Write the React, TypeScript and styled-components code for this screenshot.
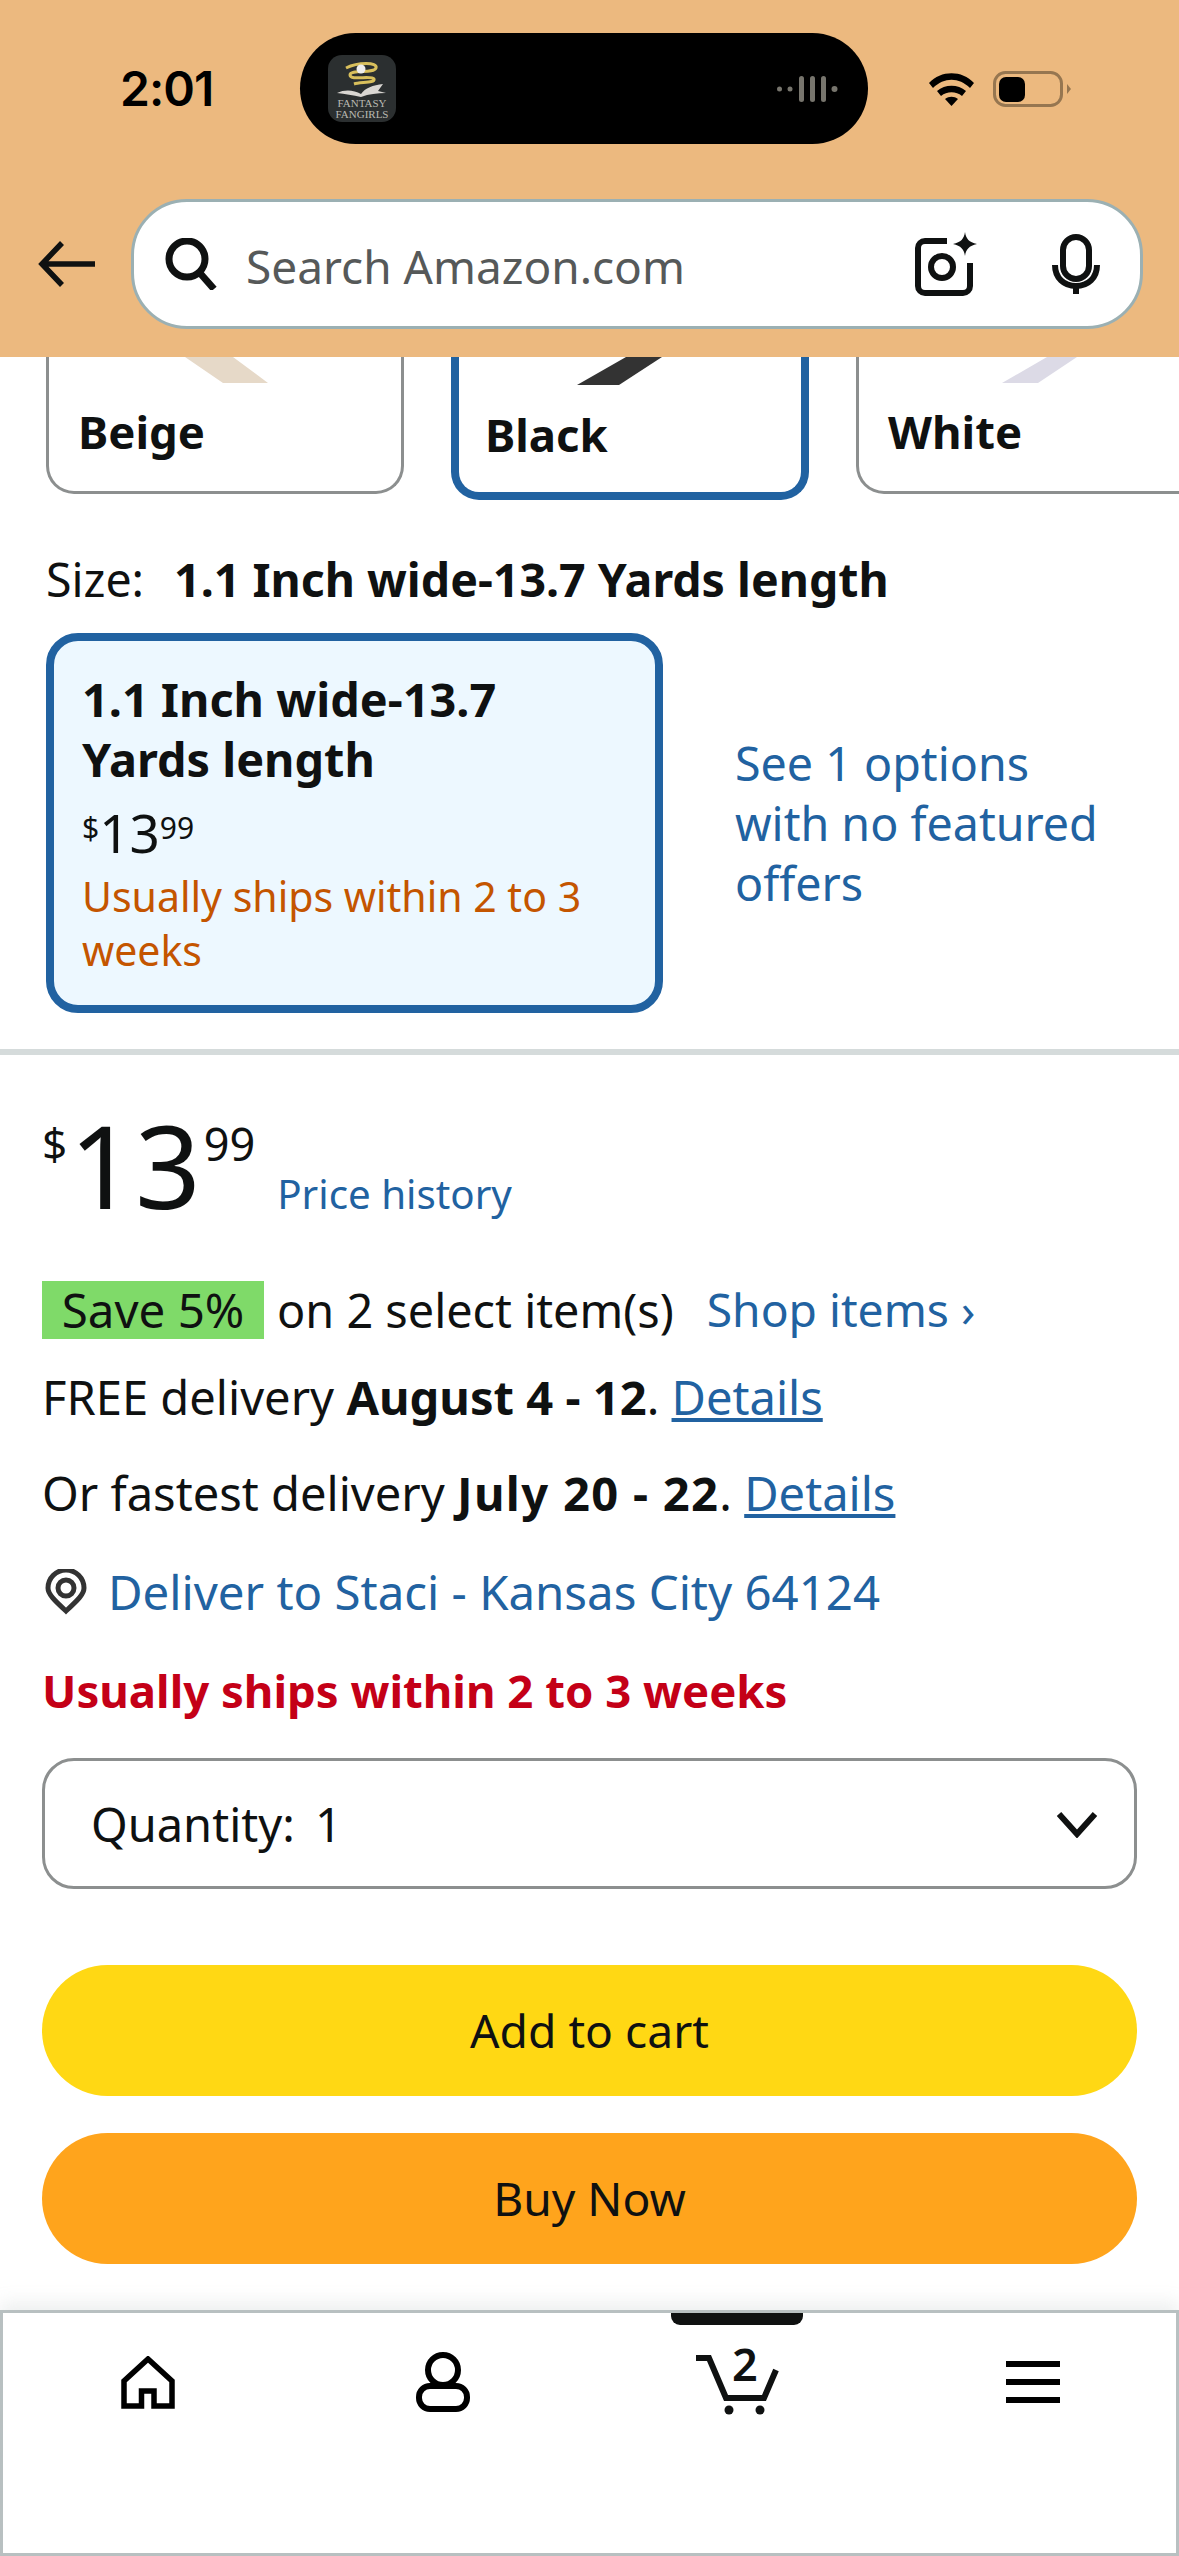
import React from "react";
import styled, { createGlobalStyle } from "styled-components";

const Global = createGlobalStyle`
  html, body { margin: 0; padding: 0; background: #fff; }
  body { font-family: "Noto Sans", "Open Sans", sans-serif; color: #0f1111; }
  * { box-sizing: border-box; }
`;

const Page = styled.div`
  width: 1179px; height: 2556px; display: flex; flex-direction: column; overflow: hidden;
`;
const Header = styled.header`
  height: 357px; background: #ecb97f; flex: none; display: flex; flex-direction: column;
`;
const StatusBar = styled.div`
  height: 199px; padding: 33px 72px 0 120px; display: flex; align-items: flex-start;
`;
const Time = styled.div`
  width: 180px; height: 111px; display: flex; align-items: center;
  font: 600 48px/1 "Inter", sans-serif; letter-spacing: -1px; color: #000;
`;
const Island = styled.div`
  width: 568px; height: 111px; background: #000; border-radius: 56px; display: flex; align-items: center;
  justify-content: space-between; padding: 0 30px 0 28px;
`;
const StatusIcons = styled.div`
  flex: 1; height: 111px; display: flex; align-items: center; gap: 18px; padding-left: 60px;
`;
const Search = styled.div`
  display: flex; align-items: center; padding: 0 0 0 38px; gap: 35px;
`;
const SearchBox = styled.div`
  width: 1012px; height: 130px; background: #fff; border: 3px solid #9bb0b3; border-radius: 56px;
  display: flex; align-items: center; padding: 0 40px 0 31px;
`;
const Placeholder = styled.div`
  flex: 1; font-size: 46px; color: #565959; padding: 4px 0 0 29px;
`;
const CameraSlot = styled.span`
  display: flex; margin-right: 73px;
`;
const Swatches = styled.div`
  display: flex; gap: 47px; padding-left: 46px; height: 143px; align-items: flex-start; flex: none; overflow: hidden;
`;
const Swatch = styled.div<{ $on?: boolean }>`
  flex: none; width: 358px; height: ${p => (p.$on ? 143 : 137)}px;
  background: #fff; border: ${p => (p.$on ? "8px solid #2162a1" : "3px solid #8c8f8f")}; border-top: 0;
  border-radius: 0 0 28px 28px; position: relative;
  padding: ${p => (p.$on ? "46px 0 0 26px" : "43px 0 0 29px")};
  font-size: 45.5px; font-weight: 700; line-height: 62px;
`;
const Thread = styled.svg`
  position: absolute; top: 0; left: 100px;
`;
const SizeRow = styled.div`
  display: flex; gap: 30px; padding: 49px 0 0 46px; font-size: 46.5px; line-height: 60px; flex: none;
`;
const Strong = styled.span<{ $track?: boolean }>`
  font-weight: 700;
  letter-spacing: ${p => (p.$track ? "1.3px" : "0")};
`;
const SizeBlock = styled.div`
  display: flex; align-items: center; padding: 24px 0 0 46px; flex: none;
`;
const SizeCard = styled.div`
  width: 617px; height: 380px; background: #edf8ff; border: 8px solid #2162a1; border-radius: 32px;
  padding: 28px 0 0 28px; flex: none;
`;
const CardTitle = styled.div`
  font-size: 46.8px; font-weight: 700; line-height: 60px; width: 530px;
`;
const CardPrice = styled.div`
  display: flex; align-items: flex-start; margin-top: 16px; height: 56px;
  font-size: 53px; line-height: 56px;
`;
const Sup = styled.span`
  font-size: 30px; line-height: 1; margin-top: 8px;
`;
const CardShips = styled.div`
  color: #c45500; font-size: 41px; line-height: 54px; margin-top: 8px; width: 535px;
`;
const OptionsLink = styled.a`
  color: #2162a1; font-size: 46.6px; line-height: 60px; width: 380px; margin-left: 72px;
`;
const Divider = styled.div`
  height: 6px; background: #d5dbdb; margin-top: 36px; flex: none;
`;
const Details = styled.div`
  padding: 0 42px; display: flex; flex-direction: column; flex: none;
`;
const PriceRow = styled.div`
  display: flex; align-items: flex-start; height: 130px; margin-top: 58px; color: #0f1111;
`;
const PriceDollar = styled.span`
  font-size: 44px; line-height: 1; margin-top: 8px;
`;
const PriceMain = styled.span`
  font-size: 115px; line-height: 104px; margin-left: 2px;
`;
const PriceCents = styled.span`
  font-size: 45px; line-height: 1; margin: 8px 0 0 3px;
`;
const PriceHistory = styled.a`
  color: #2162a1; font-size: 40.3px; line-height: 54px; margin: 54px 0 0 22px;
`;
const PromoRow = styled.div`
  display: flex; align-items: center; font-size: 46.8px; margin-top: 38px; height: 58px; line-height: 58px;
`;
const Badge = styled.span`
  background: #7fda69; width: 222px; height: 58px; display: flex; align-items: center; justify-content: center; margin-right: 13px;
  font-size: 47.5px;
`;
const PromoLink = styled.a`
  color: #2162a1; margin-left: 33px; font-size: 46.2px;
`;
const Line = styled.div<{ $mt: number }>`
  font-size: 47.1px; line-height: 60px; margin-top: ${p => p.$mt}px;
`;
const Under = styled.a`
  color: #2162a1; text-decoration: underline;
`;
const LocationRow = styled.a`
  display: flex; align-items: center; gap: 21px; color: #2162a1; font-size: 47.4px; line-height: 60px; margin-top: 39px; padding-left: 3px;
`;
const Ships = styled.div`
  color: #c40017; font-size: 45.5px; font-weight: 700; line-height: 60px; margin-top: 38px;
`;
const Quantity = styled.div`
  height: 131px; border: 3px solid #8c8f8f; border-radius: 32px; display: flex; align-items: center;
  justify-content: space-between; padding: 0 36px 0 46px; font-size: 47px; margin-top: 38px; width: 1095px;
`;
const QtyValue = styled.span` margin-left: 8px; `;
const ActionButton = styled.div<{ $bg: string; $mt: number }>`
  width: 1095px; height: 131px; border-radius: 66px; background: ${p => p.$bg}; margin-top: ${p => p.$mt}px;
  display: flex; align-items: center; justify-content: center; font-size: 46.2px; color: #0f1111;
`;
const BottomNav = styled.nav`
  margin-top: auto; height: 246px; border: 3px solid #b8c0c1; background: #fff;
  box-shadow: 0 -8px 16px rgba(160,170,170,.18); position: relative; flex: none;
`;
const NavGrid = styled.div`
  display: grid; grid-template-columns: repeat(4, 295px); margin-left: -3px;
`;
const ActiveBar = styled.div`
  position: absolute; top: 0; left: 668px; width: 132px; height: 12px; background: #0f1111; border-radius: 0 0 9px 9px;
`;
const NavCell = styled.div<{ $top: number }>`
  height: 120px; display: flex; justify-content: center; align-items: flex-start; padding-top: ${p => p.$top}px;
`;
const CartWrap = styled.div`
  position: relative; width: 83px; height: 68px;
`;
const CartCount = styled.span`
  position: absolute; left: 36px; top: -11px; font-size: 45px; line-height: 56px; font-weight: 600; color: #0f1111;
`;

export default function App() {
  return (
    <Page>
      <Global />
      <Header>
        <StatusBar>
          <Time>2:01</Time>
          <Island>
            <svg width="68" height="67" viewBox="0 0 68 67">
              <rect width="68" height="67" rx="14" fill="#2b2f30" />
              <path d="M18 13c12-6 32-6 30 0s-26 1-26 7 22 0 24 4-14 3-20 5" fill="none" stroke="#d8bf5c" strokeWidth="3" />
              <circle cx="33" cy="14" r="4.5" fill="#eee" />
              <path d="M9 38c8-4 17-3 24 1 4-6 12-9 22-10l-5 7 8 2c-9 0-17 1-25 4-8-2-16-3-24-4z" fill="#d9d6d2" />
              <text x="34" y="52" textAnchor="middle" fontFamily="Liberation Serif, serif" fontSize="11" fill="#b9b9b2">FANTASY</text>
              <text x="34" y="63" textAnchor="middle" fontFamily="Liberation Serif, serif" fontSize="11" fill="#b9b9b2">FANGIRLS</text>
            </svg>
            <svg width="61" height="26" viewBox="0 0 61 26" fill="#77756d">
              <circle cx="2.5" cy="13" r="2.5" /><circle cx="13" cy="13" r="2.5" />
              <rect x="22" y="0" width="5" height="26" rx="2.5" />
              <rect x="33" y="0" width="5" height="26" rx="2.5" />
              <rect x="44" y="0" width="5" height="26" rx="2.5" />
              <circle cx="57.5" cy="13" r="3" />
            </svg>
          </Island>
          <StatusIcons>
            <svg width="47" height="35" viewBox="0 0 47 35">
              <path d="M1 12C13-1 34-1 46 12l-4 5C31 6 16 6 5 17z" />
              <path d="M9 20c8-7 21-7 29 0l-4 5c-6-5-15-5-21 0z" />
              <path d="M17 28c4-3 9-3 13 0l-6.500 7z" />
            </svg>
            <svg width="79" height="36" viewBox="0 0 79 36" fill="none">
              <rect x="1.500" y="1.500" width="67" height="33" rx="11" stroke="#967650" strokeWidth="3" />
              <rect x="6" y="6" width="26" height="25" rx="7" fill="#000" />
              <path d="M74 13l4 5-4 5z" fill="#967650" />
            </svg>
          </StatusIcons>
        </StatusBar>
        <Search>
          <svg width="58" height="46" viewBox="0 0 58 46" fill="none" stroke="#0f1111">
            <path d="M57 23H5M24 2 4 23l20 21" strokeWidth="5.500" />
          </svg>
          <SearchBox>
            <svg width="52" height="52" viewBox="0 0 52 52" fill="none" stroke="#0f1111" strokeWidth="7">
              <circle cx="22" cy="21" r="18" />
              <path d="m34 34 15 17" />
            </svg>
            <Placeholder>Search Amazon.com</Placeholder>
            <CameraSlot>
              <svg width="64" height="64" viewBox="0 0 64 64" fill="none" stroke="#0f1111" strokeWidth="6">
                <path d="M32 9H10a7 7 0 0 0-7 7v38a7 7 0 0 0 7 7h38a7 7 0 0 0 7-7V31" />
                <circle cx="27" cy="35" r="11" />
                <path d="M50 0c1 7 4 10 12 12-8 2-11 5-12 12-1-7-4-10-12-12 8-2 11-5 12-12z" fill="#0f1111" stroke="none" />
              </svg>
            </CameraSlot>
            <svg width="48" height="60" viewBox="0 0 48 60" fill="none" stroke="#0f1111" strokeWidth="6">
              <rect x="11" y="3" width="26" height="42" rx="13" />
              <path d="M3 31c0 13 9 21 21 21s21-8 21-21M24 52v8" />
            </svg>
          </SearchBox>
        </Search>
      </Header>

      <Swatches>
        <Swatch>
          <Thread width="150" height="26" viewBox="0 0 150 26"><path d="M36 0h48l35 26H74z" fill="#e6d9c8" /></Thread>
          Beige
        </Swatch>
        <Swatch $on>
          <Thread width="180" height="28" viewBox="0 0 180 28"><path d="M67 0h36L60 28H18z" fill="#333" /></Thread>
          Black
        </Swatch>
        <Swatch>
          <Thread width="180" height="26" viewBox="0 0 180 26"><path d="M88 0h30L79 26H43z" fill="#dcdae6" /></Thread>
          White
        </Swatch>
      </Swatches>

      <SizeRow>
        <span>Size:</span>
        <Strong>1.1 Inch wide-13.7 Yards length</Strong>
      </SizeRow>

      <SizeBlock>
        <SizeCard>
          <CardTitle>1.1 Inch wide-13.7 Yards length</CardTitle>
          <CardPrice>
            <Sup>$</Sup>13<Sup>99</Sup>
          </CardPrice>
          <CardShips>Usually ships within 2 to 3 weeks</CardShips>
        </SizeCard>
        <OptionsLink>See 1 options with no featured offers</OptionsLink>
      </SizeBlock>

      <Divider />

      <Details>
        <PriceRow>
          <PriceDollar>$</PriceDollar>
          <PriceMain>13</PriceMain>
          <PriceCents>99</PriceCents>
          <PriceHistory>Price history</PriceHistory>
        </PriceRow>
        <PromoRow>
          <Badge>Save 5%</Badge>
          on 2 select item(s)
          <PromoLink>Shop items ›</PromoLink>
        </PromoRow>
        <Line $mt={28}>FREE delivery <Strong>August 4 - 12</Strong>. <Under>Details</Under></Line>
        <Line $mt={36}>Or fastest delivery <Strong $track>July 20 - 22</Strong>. <Under>Details</Under></Line>
        <LocationRow>
          <svg width="42" height="46" viewBox="0 0 42 46" fill="none">
            <path d="M21 42C9 31 3 25 3 19a18 18 0 0 1 36 0c0 6-6 12-18 23z" stroke="#333" strokeWidth="5" />
            <circle cx="21" cy="19" r="8" stroke="#333" strokeWidth="5" />
          </svg>
          Deliver to Staci - Kansas City 64124
        </LocationRow>
        <Ships>Usually ships within 2 to 3 weeks</Ships>
        <Quantity>
          <span>Quantity: <QtyValue>1</QtyValue></span>
          <svg width="42" height="28" viewBox="0 0 42 28" fill="none" stroke="#0f1111" strokeWidth="6">
            <path d="m3 4 18 20L39 4" />
          </svg>
        </Quantity>
        <ActionButton $bg="#ffd814" $mt={76}>Add to cart</ActionButton>
        <ActionButton $bg="#ffa41c" $mt={37}>Buy Now</ActionButton>
      </Details>

      <BottomNav>
        <ActiveBar />
        <NavGrid>
          <NavCell $top={43}>
            <svg width="54" height="53" viewBox="0 0 54 53" fill="none" stroke="#000" strokeWidth="5.500">
              <path d="M20.500 50V35h12.500v15H51V25L27 3 3 25v25z" />
            </svg>
          </NavCell>
          <NavCell $top={39}>
            <svg width="54" height="60" viewBox="0 0 54 60" fill="none" stroke="#000" strokeWidth="6">
              <circle cx="27" cy="18" r="15" />
              <rect x="3" y="34" width="48" height="23" rx="11" />
            </svg>
          </NavCell>
          <NavCell $top={34}>
            <CartWrap>
              <svg width="83" height="68" viewBox="0 0 83 68" fill="#0f1111">
                <path d="M0 11h13l17 40h38l12-28" fill="none" stroke="#0f1111" strokeWidth="6" />
                <circle cx="33" cy="63" r="4.500" /><circle cx="64" cy="63" r="4.500" />
              </svg>
              <CartCount>2</CartCount>
            </CartWrap>
          </NavCell>
          <NavCell $top={48}>
            <svg width="54" height="42" viewBox="0 0 54 42" fill="#000">
              <rect width="54" height="6" /><rect y="18" width="54" height="6" /><rect y="36" width="54" height="6" />
            </svg>
          </NavCell>
        </NavGrid>
      </BottomNav>
    </Page>
  );
}
